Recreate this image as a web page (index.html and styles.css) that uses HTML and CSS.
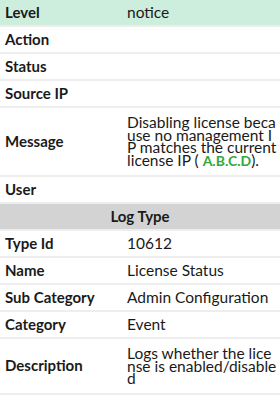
FILE: index.html
```html
<!DOCTYPE html>
<html lang="en">
<head>
    <meta charset="UTF-8">
    <meta name="viewport" content="width=device-width, initial-scale=1.0">
    <title>Log Details</title>
    <link rel="stylesheet" href="styles.css">
</head>
<body>
    <table class="details">
        <tr class="level-row"><th>Level</th><td>notice</td></tr>
        <tr><th>Action</th><td></td></tr>
        <tr><th>Status</th><td></td></tr>
        <tr><th>Source IP</th><td></td></tr>
        <tr><th>Message</th><td class="wrap">Disabling license because no management IP matches the current license IP ( <span class="ip">A.B.C.D</span>).</td></tr>
        <tr><th>User</th><td></td></tr>
        <tr class="section"><th colspan="2">Log Type</th></tr>
        <tr><th>Type Id</th><td>10612</td></tr>
        <tr><th>Name</th><td>License Status</td></tr>
        <tr><th>Sub Category</th><td>Admin Configuration</td></tr>
        <tr><th>Category</th><td>Event</td></tr>
        <tr><th>Description</th><td class="wrap">Logs whether the license is enabled/disabled</td></tr>
    </table>
</body>
</html>
```
FILE: styles.css
```css
body {
    margin: 0;
    font-family: Lato, "Noto Sans", sans-serif;
    color: #1a1a1a;
    background-color: white;
}
.details {
    width: 100%;
    border-collapse: collapse;
    table-layout: fixed;
}
.details th,
.details td {
    border-bottom: 2px solid #eeeeee;
    text-align: left;
    vertical-align: middle;
}
.details th {
    width: 112px;
    padding: 4px 5px;
    font-size: 15px;
    line-height: 17px;
    font-weight: bold;
}
.details td {
    padding: 4px 5px;
    font-size: 15.5px;
    line-height: 17px;
}
.details td.wrap {
    word-break: break-all;
    padding: 8px 2px 8px 5px;
    line-height: 12.5px;
}
.level-row th,
.level-row td {
    background-color: #cdeedd;
}
.section th {
    background-color: #d3d3d3;
    text-align: center;
}
.ip {
    color: #2eaa3c;
    font-weight: bold;
    font-size: 14px;
}
```
